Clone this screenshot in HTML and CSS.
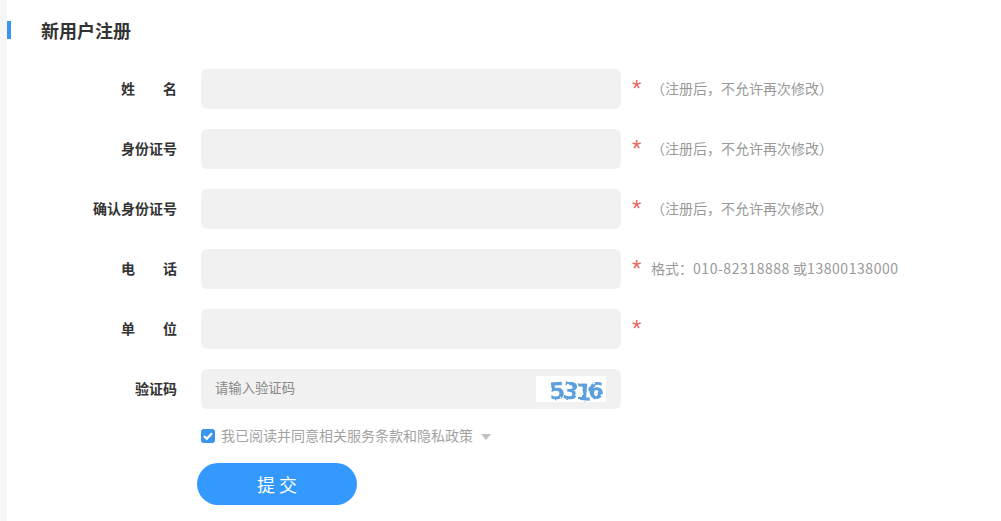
FILE: index.html
```html
<!DOCTYPE html>
<html lang="zh-CN">
  <head>
    <meta charset="UTF-8" />
    <meta name="viewport" content="width=device-width, initial-scale=1.0" />
    <title>新用户注册</title>
    <link rel="stylesheet" href="styles.css">
  </head>
  <body>
    <div class="page">
      <div class="title-row">
        <h1>新用户注册</h1>
      </div>

      <form class="reg-form">
        <div class="form-row">
          <label class="row-label"><span class="spread">姓 名</span></label>
          <input class="text-input" type="text">
          <span class="star">*</span>
          <span class="hint">（注册后，不允许再次修改）</span>
        </div>
        <div class="form-row">
          <label class="row-label">身份证号</label>
          <input class="text-input" type="text">
          <span class="star">*</span>
          <span class="hint">（注册后，不允许再次修改）</span>
        </div>
        <div class="form-row">
          <label class="row-label">确认身份证号</label>
          <input class="text-input" type="text">
          <span class="star">*</span>
          <span class="hint">（注册后，不允许再次修改）</span>
        </div>
        <div class="form-row">
          <label class="row-label"><span class="spread">电 话</span></label>
          <input class="text-input" type="text">
          <span class="star">*</span>
          <span class="hint">格式：<span class="digits">010-82318888</span> 或<span class="digits">13800138000</span></span>
        </div>
        <div class="form-row">
          <label class="row-label"><span class="spread">单 位</span></label>
          <input class="text-input" type="text">
          <span class="star">*</span>
        </div>
        <div class="form-row">
          <label class="row-label">验证码</label>
          <div class="captcha-box">
            <input class="captcha-input" type="text" placeholder="请输入验证码">
            <svg class="captcha" width="70" height="26" viewBox="0 0 70 26">
              <defs>
                <!-- wobbly edges like the generated captcha image -->
                <filter id="wobble" x="-10%" y="-10%" width="120%" height="120%">
                  <feTurbulence type="fractalNoise" baseFrequency="0.18" numOctaves="2" seed="4" />
                  <feDisplacementMap in="SourceGraphic" scale="2.5" />
                  <feGaussianBlur stdDeviation="0.35" />
                </filter>
              </defs>
              <rect width="70" height="26" fill="#fff" />
              <g filter="url(#wobble)">
                <text x="13" y="23" transform="rotate(-4 20 14)">5</text>
                <text x="27" y="23" fill="#7fa9d1" transform="rotate(6 33 14)">3</text>
                <text x="40" y="24" fill="#74a5d3" transform="rotate(5 45 14)">1</text>
                <text x="52" y="23">6</text>
              </g>
            </svg>
          </div>
        </div>

        <div class="agree-row">
          <span class="check-box">
            <svg width="14" height="14" viewBox="0 0 14 14">
              <path d="M3 7 L5.8 9.8 L11 4.2" fill="none" stroke="#fff" stroke-width="2.2" />
            </svg>
          </span>
          <span class="agree-text">我已阅读并同意相关服务条款和隐私政策</span>
          <span class="arrow"></span>
        </div>

        <button class="submit-btn" type="button">提 交</button>
      </form>
    </div>
  </body>
</html>
```

FILE: styles.css
```css
body {
  margin: 0;
  padding: 0;
  background-color: #fff;
  font-family: "Noto Sans CJK SC", "Noto Sans", sans-serif;
  color: #333;
}

.page {
  margin-left: 7px;
  height: 521px;
  box-sizing: border-box;
  box-shadow: -7px 0 0 #f6f6f6;
  padding-top: 21px;
  overflow: hidden;
}

.title-row {
  border-left: 4px solid #3b94ef;
  height: 18px;
  padding-left: 30px;
  display: flex;
  align-items: center;
}

h1 {
  margin: 0;
  font-size: 18px;
  font-weight: bold;
  line-height: 18px;
  color: #333;
}

.reg-form {
  margin-top: 30px;
}

.form-row {
  display: flex;
  align-items: center;
  height: 40px;
  margin-bottom: 20px;
}

.row-label {
  width: 170px;
  margin-right: 24px;
  padding-bottom: 2px;
  text-align: right;
  font-size: 14px;
  font-weight: bold;
  color: #333;
}

.spread {
  display: inline-block;
  width: 56px;
  text-align: justify;
  text-align-last: justify;
}

.text-input,
.captcha-box {
  width: 420px;
  height: 40px;
  box-sizing: border-box;
  border: none;
  border-radius: 6px;
  background-color: #f1f1f1;
}

.captcha-box {
  display: flex;
  align-items: center;
  justify-content: space-between;
  padding: 0 15px 0 14px;
}

.captcha-input {
  border: none;
  outline: none;
  background: transparent;
  font-family: inherit;
  font-size: 13.33px;
  line-height: 20px;
  height: 20px;
  padding: 0 0 2px;
  width: 200px;
}

.captcha-input::placeholder {
  color: #888;
}

.captcha {
  display: block;
  overflow: visible;
}

.captcha text {
  font-family: "DejaVu Sans", sans-serif;
  font-size: 23px;
  font-weight: bold;
  fill: #5b9fdc;
}

.star {
  width: 19px;
  margin-left: 11px;
  font-family: "Liberation Sans", sans-serif;
  font-size: 24px;
  line-height: 24px;
  color: #e8685f;
}

.hint {
  padding-bottom: 2px;
  font-size: 14px;
  color: #999;
}

.digits {
  letter-spacing: 0.55px;
}

.agree-row {
  display: flex;
  align-items: center;
  height: 14px;
  margin-left: 194px;
}

.check-box {
  width: 14px;
  height: 14px;
  border-radius: 3px;
  background-color: #3a94f0;
  display: block;
}

.check-box svg {
  display: block;
}

.agree-text {
  margin-left: 6px;
  padding-bottom: 2px;
  font-size: 14px;
  color: #a3a3a3;
}

.arrow {
  margin-left: 8px;
  margin-top: 2px;
  border-left: 5px solid transparent;
  border-right: 5px solid transparent;
  border-top: 6px solid #c0c0c0;
}

.submit-btn {
  display: block;
  margin-left: 190px;
  margin-top: 20px;
  width: 160px;
  height: 42px;
  border: none;
  border-radius: 21px;
  background-color: #3399ff;
  color: #fff;
  font-family: inherit;
  font-size: 18px;
  cursor: pointer;
}
```
